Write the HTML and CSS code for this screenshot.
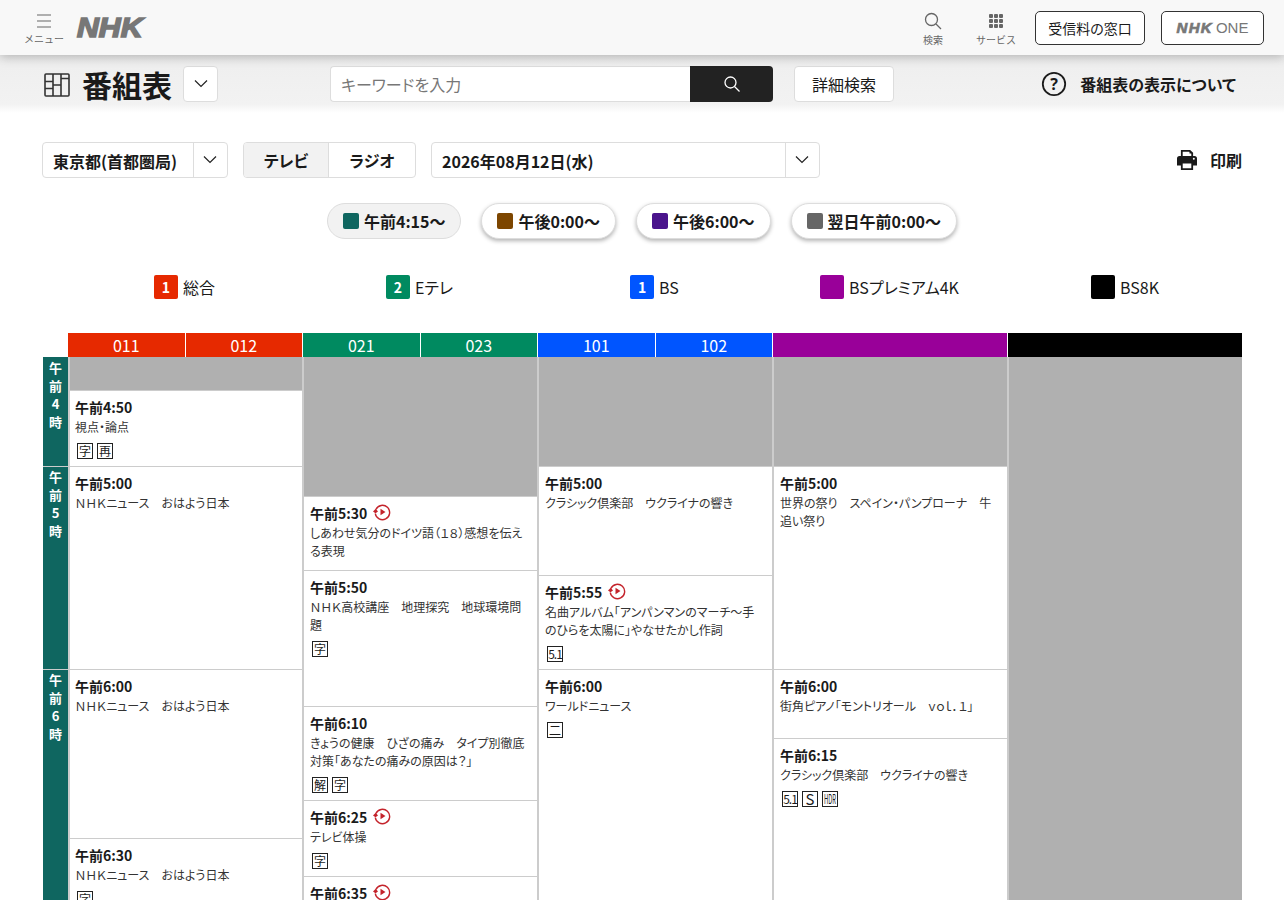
FILE: index.html
```html
<!DOCTYPE html>
<html lang="ja">
<head>
    <meta charset="UTF-8">
    <title>番組表</title>
    <link rel="stylesheet" href="styles.css">
</head>
<body>
    <header class="site-header">
        <div class="head-btn menu-btn">
            <svg width="16" height="16" viewBox="0 0 16 16" fill="none" stroke="#666" stroke-width="1.2"><path d="M1 2h14M1 8h14M1 14h14"/></svg>
            <span>メニュー</span>
        </div>
        <div class="nhk-logo">NHK</div>
        <div class="head-right">
            <div class="head-btn">
                <svg width="18" height="18" viewBox="0 0 18 18" fill="none" stroke="#666" stroke-width="1.3"><circle cx="7.5" cy="7.5" r="6"/><path d="M12 12l5 5"/></svg>
                <span>検索</span>
            </div>
            <div class="head-btn">
                <svg width="18" height="18" viewBox="0 0 18 18" fill="#666"><rect x="2" y="2" width="4" height="4" rx="1"/><rect x="7" y="2" width="4" height="4" rx="1"/><rect x="12" y="2" width="4" height="4" rx="1"/><rect x="2" y="7" width="4" height="4" rx="1"/><rect x="7" y="7" width="4" height="4" rx="1"/><rect x="12" y="7" width="4" height="4" rx="1"/><rect x="2" y="12" width="4" height="4" rx="1"/><rect x="7" y="12" width="4" height="4" rx="1"/><rect x="12" y="12" width="4" height="4" rx="1"/></svg>
                <span>サービス</span>
            </div>
            <a class="line-btn fee-btn">受信料の窓口</a>
            <a class="line-btn one-btn"><b>NHK</b> ONE</a>
        </div>
    </header>

    <section class="sub-header">
        <svg class="table-icon" width="26" height="24" viewBox="0 0 26 24" fill="none" stroke="#333" stroke-width="1.6"><rect x="1" y="1" width="24" height="22" rx="1"/><path d="M9 1v22M17 1v22M1 8.500h8M1 15.500h8M9 12h8M17 5.500h8"/></svg>
        <h1>番組表</h1>
        <button class="chev-btn"><svg width="16" height="10" viewBox="0 0 16 10" fill="none" stroke="#222" stroke-width="1.2"><path d="M2 1.500l6 6 6-6"/></svg></button>
        <div class="search">
            <div class="search-input">キーワードを入力</div>
            <div class="search-go"><svg width="18" height="18" viewBox="0 0 18 18" fill="none" stroke="#fff" stroke-width="1.3"><circle cx="7.500" cy="7.500" r="5.500"/><path d="M11.500 11.500l5 5"/></svg></div>
        </div>
        <button class="detail-btn">詳細検索</button>
        <div class="about">
            <svg width="26" height="26" viewBox="0 0 26 26"><circle cx="13" cy="13" r="11.200" fill="none" stroke="#1a1a1a" stroke-width="1.800"/><text x="13" y="18.500" text-anchor="middle" class="q-mark">?</text></svg>
            <span>番組表の表示について</span>
        </div>
    </section>

    <section class="controls">
        <div class="select area-select">
            <span>東京都(首都圏局)</span>
            <i><svg width="16" height="10" viewBox="0 0 16 10" fill="none" stroke="#222" stroke-width="1.2"><path d="M2 1.500l6 6 6-6"/></svg></i>
        </div>
        <div class="tabs">
            <div class="tab active">テレビ</div>
            <div class="tab">ラジオ</div>
        </div>
        <div class="select date-select">
            <span>2026年08月12日(水)</span>
            <i><svg width="16" height="10" viewBox="0 0 16 10" fill="none" stroke="#222" stroke-width="1.2"><path d="M2 1.500l6 6 6-6"/></svg></i>
        </div>
        <div class="print">
            <svg width="22" height="22" viewBox="0 0 22 22"><path d="M5.800 7.500V1.800h8l2.400 2.400v3.300" fill="#fff" stroke="#1a1a1a" stroke-width="1.800"/><path d="M13.500 1.500v3h3z" fill="#1a1a1a"/><path d="M3.500 7h15A2.500 2.500 0 0 1 21 9.500V16.500h-4V13H5v3.500H1V9.500A2.500 2.500 0 0 1 3.500 7z" fill="#1a1a1a"/><path d="M5.800 13.500h10.400v6.700H5.800z" fill="#fff" stroke="#1a1a1a" stroke-width="1.800"/><circle cx="17.800" cy="9.800" r="1" fill="#fff"/></svg>
            <span>印刷</span>
        </div>
    </section>

    <nav class="periods">
        <div class="pill active"><i class="c-morning"></i>午前4:15～</div>
        <div class="pill"><i class="c-noon"></i>午後0:00～</div>
        <div class="pill"><i class="c-evening"></i>午後6:00～</div>
        <div class="pill"><i class="c-night"></i>翌日午前0:00～</div>
    </nav>

    <div class="legend">
        <div class="legend-item"><b class="bg-g">1</b>総合</div>
        <div class="legend-item"><b class="bg-e">2</b>Eテレ</div>
        <div class="legend-item"><b class="bg-bs">1</b>BS</div>
        <div class="legend-item"><b class="bg-p4k"></b>BSプレミアム4K</div>
        <div class="legend-item"><b class="bg-8k"></b>BS8K</div>
    </div>

    <div class="channel-head">
        <div class="ch bg-g"><span>011</span><span>012</span></div>
        <div class="ch bg-e"><span>021</span><span>023</span></div>
        <div class="ch bg-bs"><span>101</span><span>102</span></div>
        <div class="ch bg-p4k"></div>
        <div class="ch bg-8k"></div>
    </div>

    <div class="schedule">
        <div class="hours">
            <div class="hour" style="height: 109px">午<br>前<br>4<br>時</div>
            <div class="hour" style="height: 203px">午<br>前<br>5<br>時</div>
            <div class="hour" style="height: 240px">午<br>前<br>6<br>時</div>
        </div>

        <div class="col">
            <div class="empty" style="height: 33px"></div>
            <div class="prog" style="height: 76px">
                <div class="time">午前4:50</div>
                <div class="title">視点・論点</div>
                <div class="marks"><em>字</em><em>再</em></div>
            </div>
            <div class="prog" style="height: 203px">
                <div class="time">午前5:00</div>
                <div class="title">ＮＨＫニュース　おはよう日本</div>
            </div>
            <div class="prog" style="height: 169px">
                <div class="time">午前6:00</div>
                <div class="title">ＮＨＫニュース　おはよう日本</div>
            </div>
            <div class="prog" style="height: 120px">
                <div class="time">午前6:30</div>
                <div class="title">ＮＨＫニュース　おはよう日本</div>
                <div class="marks"><em>字</em></div>
            </div>
        </div>

        <div class="col">
            <div class="empty" style="height: 139px"></div>
            <div class="prog" style="height: 74px">
                <div class="time">午前5:30 <svg class="replay"><use href="#replay"/></svg></div>
                <div class="title">しあわせ気分のドイツ語（１８）感想を伝える表現</div>
            </div>
            <div class="prog" style="height: 136px">
                <div class="time">午前5:50</div>
                <div class="title">ＮＨＫ高校講座　地理探究　地球環境問題</div>
                <div class="marks"><em>字</em></div>
            </div>
            <div class="prog" style="height: 94px">
                <div class="time">午前6:10</div>
                <div class="title">きょうの健康　ひざの痛み　タイプ別徹底対策「あなたの痛みの原因は？」</div>
                <div class="marks"><em>解</em><em>字</em></div>
            </div>
            <div class="prog" style="height: 76px">
                <div class="time">午前6:25 <svg class="replay"><use href="#replay"/></svg></div>
                <div class="title">テレビ体操</div>
                <div class="marks"><em>字</em></div>
            </div>
            <div class="prog" style="height: 100px">
                <div class="time">午前6:35 <svg class="replay"><use href="#replay"/></svg></div>
            </div>
        </div>

        <div class="col">
            <div class="empty" style="height: 109px"></div>
            <div class="prog" style="height: 109px">
                <div class="time">午前5:00</div>
                <div class="title">クラシック倶楽部　ウクライナの響き</div>
            </div>
            <div class="prog" style="height: 94px">
                <div class="time">午前5:55 <svg class="replay"><use href="#replay"/></svg></div>
                <div class="title">名曲アルバム「アンパンマンのマーチ～手のひらを太陽に」やなせたかし作詞</div>
                <div class="marks"><em class="tight">5.1</em></div>
            </div>
            <div class="prog" style="height: 240px">
                <div class="time">午前6:00</div>
                <div class="title">ワールドニュース</div>
                <div class="marks"><em>二</em></div>
            </div>
        </div>

        <div class="col">
            <div class="empty" style="height: 109px"></div>
            <div class="prog" style="height: 203px">
                <div class="time">午前5:00</div>
                <div class="title">世界の祭り　スペイン・パンプローナ　牛追い祭り</div>
            </div>
            <div class="prog" style="height: 69px">
                <div class="time">午前6:00</div>
                <div class="title">街角ピアノ「モントリオール　ｖｏｌ．１」</div>
            </div>
            <div class="prog" style="height: 170px">
                <div class="time">午前6:15</div>
                <div class="title">クラシック倶楽部　ウクライナの響き</div>
                <div class="marks"><em class="tight">5.1</em><em class="latin">S</em><em class="tiny"><span>HDR</span></em></div>
            </div>
        </div>

        <div class="col">
            <div class="empty" style="height: 560px"></div>
        </div>
    </div>

    <svg class="sprite" width="0" height="0">
        <symbol id="replay" viewBox="0 0 18 18">
            <path d="M2.900 6.500A7.200 7.200 0 1 1 2.300 10.500" fill="none" stroke="#c4232b" stroke-width="1.400"/>
            <path d="M0 8.500l2.700-2.700 2.300 2.700-2.500 1.800z" fill="#c4232b"/>
            <path d="M7.500 5.800l5 3.200-5 3.200z" fill="#c4232b"/>
        </symbol>
    </svg>
</body>
</html>
```

FILE: styles.css
```css
* {
    box-sizing: border-box;
}
html, body {
    height: 900px;
    overflow: hidden;
}
body {
    margin: 0;
    background: #fff;
    color: #1a1a1a;
    font-family: "Noto Sans CJK JP", "Noto Sans", sans-serif;
    font-feature-settings: "palt";
}
button {
    font-family: inherit;
    font-feature-settings: inherit;
}

/* site header */
.site-header {
    position: relative;
    z-index: 2;
    display: flex;
    align-items: center;
    height: 55px;
    padding: 0 20px 0 24px;
    background: #f8f8f8;
    box-shadow: 0 2px 10px rgba(0,0,0,0.25);
}
.head-btn {
    display: flex;
    flex-direction: column;
    align-items: center;
    font-size: 10px;
    line-height: 14px;
    color: #666;
    white-space: nowrap;
    font-feature-settings: normal;
}
.head-btn svg {
    margin-bottom: 3px;
}
.menu-btn {
    width: 40px;
    margin-top: 4px;
}
.nhk-logo {
    margin-left: 13px;
    font-family: "Liberation Sans", sans-serif;
    font-style: italic;
    font-weight: 700;
    font-size: 27px;
    line-height: 26px;
    color: #777;
    -webkit-text-stroke: 1.6px #777;
    transform: scaleX(1.12);
    transform-origin: left center;
}
.head-right {
    display: flex;
    align-items: center;
    margin-left: auto;
}
.head-right .head-btn {
    margin-right: 33px;
    margin-top: 4px;
}
.line-btn {
    display: flex;
    align-items: center;
    justify-content: center;
    height: 34px;
    border: 1px solid #333;
    border-radius: 5px;
    background: #fff;
    font-size: 14px;
}
.fee-btn {
    width: 110px;
    margin-left: -14px;
}
.one-btn {
    width: 103px;
    margin-left: 16px;
    color: #777;
    font-family: "Liberation Sans", sans-serif;
    font-size: 15px;
    gap: 3px;
}
.one-btn b {
    font-style: italic;
    font-size: 15px;
    letter-spacing: 1.3px;
    -webkit-text-stroke: 0.7px #777;
}

/* sub header */
.sub-header {
    display: flex;
    align-items: center;
    height: 58px;
    padding: 0 48px 0 44px;
    background: linear-gradient(#eeeeee, #f2f2f2 85%, #fff);
}
.sub-header h1 {
    margin: 0 0 0 12px;
    font-size: 30px;
    line-height: 40px;
    font-weight: 700;
    font-feature-settings: normal;
}
.table-icon {
    flex: none;
    margin-top: 2px;
}
.chev-btn {
    display: flex;
    align-items: center;
    justify-content: center;
    width: 35px;
    height: 36px;
    margin: 0 0 0 11px;
    padding: 0;
    border: 1px solid #ddd;
    border-radius: 4px;
    background: #fff;
}
.search {
    display: flex;
    height: 36px;
    margin-left: 112px;
}
.search-input {
    width: 360px;
    padding-left: 10px;
    border: 1px solid #ddd;
    border-right: 0;
    border-radius: 4px 0 0 4px;
    background: #fff;
    color: #777;
    font-size: 16px;
    line-height: 35px;
}
.search-go {
    display: flex;
    align-items: center;
    justify-content: center;
    width: 83px;
    border-radius: 0 4px 4px 0;
    background: #222;
}
.detail-btn {
    width: 100px;
    height: 36px;
    margin-left: 21px;
    border: 1px solid #ddd;
    border-radius: 4px;
    background: #fff;
    color: #1a1a1a;
    font-size: 16px;
}
.about {
    display: flex;
    align-items: center;
    gap: 13px;
    margin-left: auto;
    font-size: 16px;
    font-weight: 700;
}
.q-mark {
    font-family: "Noto Sans", sans-serif;
    font-size: 16px;
    font-weight: 700;
    fill: #1a1a1a;
}

/* area, medium and date */
.controls {
    display: flex;
    align-items: center;
    height: 36px;
    margin: 29px 42px 0;
}
.select {
    display: flex;
    height: 36px;
    border: 1px solid #ddd;
    border-radius: 4px;
    font-size: 16px;
    font-weight: 700;
    line-height: 36px;
}
.select span {
    flex: 1;
    padding-left: 10px;
    white-space: nowrap;
}
.select i {
    display: flex;
    align-items: center;
    justify-content: center;
    width: 34px;
    padding-right: 2px;
    border-left: 1px solid #ddd;
}
.area-select {
    width: 186px;
}
.date-select {
    width: 389px;
    margin-left: 15px;
}
.tabs {
    display: flex;
    width: 173px;
    height: 36px;
    margin-left: 15px;
    border: 1px solid #ddd;
    border-radius: 4px;
    overflow: hidden;
}
.tab {
    flex: 1;
    text-align: center;
    font-size: 16px;
    font-weight: 700;
    line-height: 34px;
}
.tab.active {
    flex: none;
    width: 85px;
    border-right: 1px solid #ddd;
    background: #f2f2f2;
}
.print {
    display: flex;
    align-items: center;
    gap: 12px;
    margin-left: auto;
    font-size: 16px;
    font-weight: 700;
}

/* time period pills */
.periods {
    display: flex;
    justify-content: center;
    gap: 20px;
    margin-top: 25px;
}
.pill {
    display: flex;
    align-items: center;
    height: 36px;
    padding: 0 15px;
    border: 1px solid #ddd;
    border-radius: 18px;
    background: #fff;
    box-shadow: 0 2px 4px rgba(0,0,0,0.3);
    font-size: 16px;
    font-weight: 700;
}
.pill.active {
    background: #f2f2f2;
    box-shadow: none;
}
.pill i {
    width: 16px;
    height: 16px;
    margin-right: 5px;
    border-radius: 2px;
}
.c-morning { background: #0f6660; }
.c-noon { background: #7d4600; }
.c-evening { background: #4a148c; }
.c-night { background: #666; }

.bg-g { background: #e62900; }
.bg-e { background: #008a60; }
.bg-bs { background: #0055ff; }
.bg-p4k { background: #990099; }
.bg-8k { background: #000; }

/* channel legend */
.legend {
    display: grid;
    grid-template-columns: repeat(4, 235px) 236px;
    height: 24px;
    margin: 36px 0 0 67px;
}
.legend-item {
    display: flex;
    align-items: center;
    justify-content: center;
    gap: 5px;
    font-size: 16px;
}
.legend-item b {
    width: 24px;
    height: 24px;
    border-radius: 2px;
    color: #fff;
    font-size: 14px;
    line-height: 24px;
    text-align: center;
}

/* channel header */
.channel-head {
    display: grid;
    grid-template-columns: repeat(4, 235px) 234px;
    height: 24px;
    margin: 34px 0 0 68px;
}
.ch {
    display: flex;
    margin-right: 1px;
    color: #fff;
    font-size: 16px;
    line-height: 25px;
    text-align: center;
}
.ch:last-child {
    margin-right: 0;
}
.ch span {
    flex: 1;
}
.ch span + span {
    border-left: 1px solid #fff;
}

/* schedule */
.schedule {
    display: grid;
    grid-template-columns: 25px repeat(4, 235px) 234px;
    margin-left: 43px;
}
.hour {
    padding-top: 1px;
    border-top: 1px solid #ccc;
    background: #0f6660;
    color: #fff;
    font-size: 13px;
    font-weight: 700;
    line-height: 18px;
    text-align: center;
}
.hour:first-child {
    border-top: 0;
    padding-top: 2px;
}
.col {
    border-left: 2px solid #ccc;
    min-width: 0;
}
.col + .col {
    margin-left: -1px;
}
.empty {
    background: #b0b0b0;
}
.prog {
    padding: 5px 8px 0 5px;
    border-top: 1px solid #ccc;
    background: #fff;
    overflow: hidden;
}
.col + .col .prog {
    padding-left: 6px;
}
.time {
    display: flex;
    align-items: center;
    gap: 6px;
    font-size: 14px;
    font-weight: 700;
    line-height: 22px;
    font-feature-settings: normal;
}
.replay {
    width: 18px;
    height: 18px;
    margin-top: -3px;
}
.title {
    font-size: 12px;
    line-height: 18px;
    color: #333;
}
.marks {
    display: flex;
    gap: 4px;
    margin: 7px 0 0 2px;
}
.marks em {
    width: 16px;
    height: 16px;
    border: 1px solid #222;
    font-style: normal;
    font-size: 12px;
    line-height: 14px;
    text-align: center;
    white-space: nowrap;
}
.marks .tight {
    font-size: 12px;
    letter-spacing: -1px;
}
.marks .latin {
    font-size: 15px;
}
.marks .tiny span {
    display: block;
    width: 28px;
    margin-left: -7px;
    font-size: 13px;
    transform: scaleX(0.45);
}
.sprite {
    position: absolute;
}
```
